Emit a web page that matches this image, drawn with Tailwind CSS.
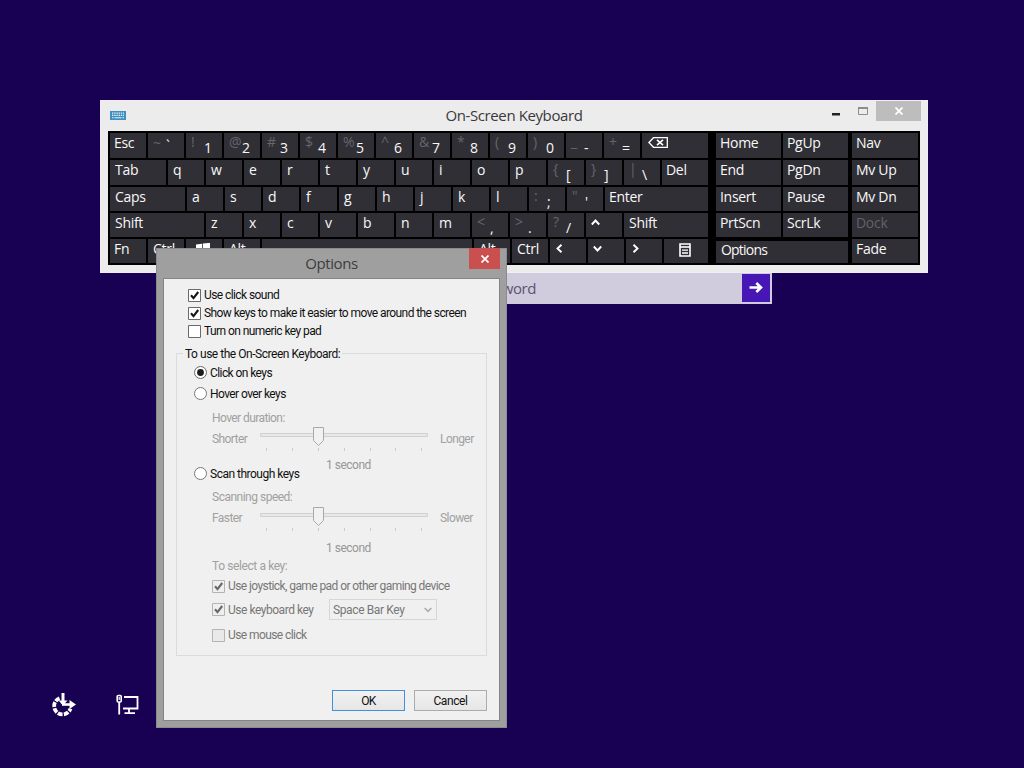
<!DOCTYPE html>
<html lang="en">
<head>
    <meta charset="utf-8"/>
    <meta content="width=device-width, initial-scale=1.0" name="viewport"/>
    <title>On-Screen Keyboard</title>
    <script src="https://cdn.jsdelivr.net/npm/@tailwindcss/browser@4"></script>
</head>
<body class="relative w-[1024px] h-[768px] overflow-hidden bg-[#180052] font-['Open_Sans',sans-serif]">

<!-- Password box -->
<div class="absolute left-[452px] top-[272px] w-[320px] h-8 flex items-center justify-between bg-[#d0cbdd] pr-0.5">
    <span class="pl-[20px] text-[15px] leading-8 tracking-[-0.45px] text-[#5b5670]">Password</span>
    <button class="w-7 h-7 flex items-center justify-center bg-[#4617b4]">
        <svg class="w-4 h-4" viewBox="0 0 16 16" fill="none" stroke="#fff" stroke-width="2.6"><path d="M1.5 7.5h11.5M8.3 3l4.7 4.5-4.7 4.5"/></svg>
    </button>
</div>

<!-- Keyboard window -->
<section class="absolute left-[100px] top-[100px] w-[828px] h-[173px] bg-[#ececed] border border-[#f1edf8]">
    <header class="relative h-[30px] flex items-start justify-end pr-[6px]">
        <svg class="absolute left-[9px] top-[10px] w-4 h-[9px]" viewBox="0 0 16 9"><path fill="#3f8fc0" d="M0 0h16v9H0z"/><path stroke="#e4f2fa" stroke-width="1.2" stroke-dasharray="1.4 .8" d="M2 2.2h12M2 4.4h12"/><path stroke="#e4f2fa" stroke-width="1.1" d="M2 6.8h1.5M4.5 6.8h7M12.5 6.8H14"/></svg>
        <h1 class="absolute inset-x-0 top-0 text-center text-[15px] leading-[28px] tracking-[-0.4px] text-[#3a3a3a]" id="kbTitle">On-Screen Keyboard</h1>
        <svg class="w-[50px] h-5" viewBox="0 0 50 20"><path fill="#222" d="M6 12h8v2.5H6z"/><path fill="none" stroke="#8c8c8c" d="M32.5 6.5h9v7h-9z"/><path fill="#8c8c8c" d="M32 6h10v2H32z"/></svg>
        <button class="w-[45px] h-5 flex items-center justify-center bg-[#bdbdbd]">
            <svg class="w-2 h-2" viewBox="0 0 8 8" stroke="#fff" stroke-width="1.8"><path d="M.5.5l7 7M7.5.5l-7 7"/></svg>
        </button>
    </header>
    <div class="ml-[7px] w-[812px] h-[134px] flex bg-black p-0.5 text-[14px] leading-5 tracking-[-0.3px] text-[#f8f8f8]">
        <div class="w-[598px] flex flex-col gap-0.5" id="keys"></div>
        <div class="ml-2 w-[132px] grid grid-cols-2 grid-rows-[25px_25px_24px_24px_24px] gap-0.5">
            <div class="bg-[#302f36] pl-1">Home</div>
            <div class="bg-[#302f36] pl-1">PgUp</div>
            <div class="bg-[#302f36] pl-1">End</div>
            <div class="bg-[#302f36] pl-1">PgDn</div>
            <div class="bg-[#302f36] pl-1">Insert</div>
            <div class="bg-[#302f36] pl-1">Pause</div>
            <div class="bg-[#302f36] pl-1">PrtScn</div>
            <div class="bg-[#302f36] pl-1">ScrLk</div>
            <div class="col-span-2 mt-0.5 bg-[#302f36] pl-[5px] leading-[18px] tracking-[-0.8px]">Options</div>
        </div>
        <div class="ml-1 w-[66px] grid grid-rows-[25px_25px_24px_24px_24px] gap-0.5">
            <div class="bg-[#302f36] pl-1">Nav</div>
            <div class="bg-[#302f36] pl-1">Mv Up</div>
            <div class="bg-[#302f36] pl-1">Mv Dn</div>
            <div class="bg-[#302f36] pl-1 text-[#626167]">Dock</div>
            <div class="bg-[#302f36] pl-1">Fade</div>
        </div>
    </div>
</section>

<!-- Options dialog -->
<section class="absolute left-[156px] top-[248px] w-[351px] h-[480px] bg-[#9f9f9f] border border-[#8b8b8b] px-[6px]">
    <header class="relative h-[29px]">
        <h2 class="text-center text-[15px] leading-[29px] tracking-[-0.4px] text-[#3c3c3c]" id="dlgTitle">Options</h2>
        <button class="absolute right-0 -top-px w-[31px] h-[21px] flex items-center justify-center bg-[#c9504f]">
            <svg class="w-2 h-2" viewBox="0 0 8 8" stroke="#fff" stroke-width="1.7"><path d="M.5.5l7 7M7.5.5l-7 7"/></svg>
        </button>
    </header>
    <div class="h-[443px] w-[337px] bg-[#f0f0f0] border border-[#858585] pl-3 pt-[7px] font-[Roboto,sans-serif] text-[12px] tracking-[-0.58px] text-[#111]">
        <label class="ml-3 h-[18px] flex items-center gap-[3px]">
            <svg class="w-[13px] h-[13px]" viewBox="0 0 13 13"><path fill="#fff" stroke="#6a6a6a" d="M.5.5h12v12H.5z"/><path fill="none" stroke="#151515" stroke-width="2.1" d="M3 6.3l2.5 2.9L10.2 3"/></svg>
            <span>Use click sound</span>
        </label>
        <label class="ml-3 h-[18px] flex items-center gap-[3px]">
            <svg class="w-[13px] h-[13px]" viewBox="0 0 13 13"><path fill="#fff" stroke="#6a6a6a" d="M.5.5h12v12H.5z"/><path fill="none" stroke="#151515" stroke-width="2.1" d="M3 6.3l2.5 2.9L10.2 3"/></svg>
            <span>Show keys to make it easier to move around the screen</span>
        </label>
        <label class="ml-3 h-[18px] flex items-center gap-[3px]">
            <svg class="w-[13px] h-[13px]" viewBox="0 0 13 13"><path fill="#fff" stroke="#6a6a6a" d="M.5.5h12v12H.5z"/></svg>
            <span>Turn on numeric key pad</span>
        </label>

        <div class="relative mt-[13px] w-[311px] h-[303px] border border-[#dadcdc] flex flex-col">
            <span class="absolute left-1.5 top-[-9px] bg-[#f0f0f0] px-0.5 leading-[18px] tracking-[-0.47px]">To use the On-Screen Keyboard:</span>
            <label class="ml-[17px] mt-[9px] h-[19px] flex items-center gap-[3px]">
                <svg class="w-[13px] h-[13px]" viewBox="0 0 13 13"><circle cx="6.5" cy="6.5" r="6" fill="#fff" stroke="#666"/><circle cx="6.5" cy="6.5" r="3.4" fill="#1c1c1c"/></svg>
                <span>Click on keys</span>
            </label>
            <label class="ml-[17px] mt-0.5 h-[19px] flex items-center gap-[3px]">
                <svg class="w-[13px] h-[13px]" viewBox="0 0 13 13"><circle cx="6.5" cy="6.5" r="6" fill="#fff" stroke="#777"/></svg>
                <span>Hover over keys</span>
            </label>
            <p class="ml-[35px] mt-1.5 leading-[18px] text-[#a0a0a0]">Hover duration:</p>
            <div class="ml-[35px] h-6 flex items-center text-[#a0a0a0]">
                <span class="w-12">Shorter</span>
                <svg class="w-[168px] h-6" viewBox="0 0 168 24"><path fill="#e7e9e9" stroke="#cfd1d1" d="M.5 6.5h167v3H.5z"/><path stroke="#ccc" d="M6.5 21v3M32.5 21v3M58.5 21v3M84.5 21v3M110.5 21v3M135.5 21v3M161.5 21v3"/><path fill="#f1f1f1" stroke="#a9a9a9" d="M53.5.5h10v13l-5 5-5-5z"/></svg>
                <span class="ml-3">Longer</span>
            </div>
            <div class="ml-[17px] mt-[5px] h-[27px] flex items-end">
                <label class="w-[132px] h-[19px] flex items-center gap-[3px] tracking-[-0.5px]">
                    <svg class="w-[13px] h-[13px]" viewBox="0 0 13 13"><circle cx="6.5" cy="6.5" r="6" fill="#fff" stroke="#777"/></svg>
                    <span>Scan through keys</span>
                </label>
                <span class="self-start leading-[18px] tracking-[-0.5px] text-[#979797]">1 second</span>
            </div>
            <p class="ml-[35px] mt-[5px] leading-[18px] tracking-[-0.5px] text-[#a0a0a0]">Scanning speed:</p>
            <div class="ml-[35px] h-6 flex items-center text-[#a0a0a0]">
                <span class="w-12">Faster</span>
                <svg class="mt-0.5 w-[168px] h-6" viewBox="0 0 168 24"><path fill="#e7e9e9" stroke="#cfd1d1" d="M.5 6.5h167v3H.5z"/><path stroke="#ccc" d="M6.5 21v3M32.5 21v3M58.5 21v3M84.5 21v3M110.5 21v3M135.5 21v3M161.5 21v3"/><path fill="#f1f1f1" stroke="#a9a9a9" d="M53.5.5h10v13l-5 5-5-5z"/></svg>
                <span class="ml-3">Slower</span>
            </div>
            <p class="ml-[149px] mt-[9px] leading-[18px] tracking-[-0.5px] text-[#979797]">1 second</p>
            <p class="ml-[35px] leading-[18px] text-[#a0a0a0] tracking-[-0.4px]">To select a key:</p>
            <label class="ml-[35px] mt-0.5 h-[18px] flex items-center gap-[3px] text-[#777]">
                <svg class="w-[13px] h-[13px]" viewBox="0 0 13 13"><path fill="#efefef" stroke="#b4b4b4" d="M.5.5h12v12H.5z"/><path fill="none" stroke="#686868" stroke-width="2.1" d="M3 6.3l2.5 2.9L10.2 3"/></svg>
                <span>Use joystick, game pad or other gaming device</span>
            </label>
            <div class="ml-[35px] mt-1 h-[21px] flex items-center text-[#777]">
                <label class="w-[117px] flex items-center gap-[3px] tracking-[-0.47px]">
                    <svg class="w-[13px] h-[13px]" viewBox="0 0 13 13"><path fill="#efefef" stroke="#b4b4b4" d="M.5.5h12v12H.5z"/><path fill="none" stroke="#686868" stroke-width="2.1" d="M3 6.3l2.5 2.9L10.2 3"/></svg>
                    <span>Use keyboard key</span>
                </label>
                <div class="w-[108px] h-[21px] flex items-center justify-between border border-[#d6d6d6] pl-[3px] pr-1 tracking-[-0.38px]">
                    <span>Space Bar Key</span>
                    <svg class="w-2 h-[6px]" viewBox="0 0 8 6" fill="none" stroke="#a8a8a8" stroke-width="1.5"><path d="M.7 1L4 4.5 7.3 1"/></svg>
                </div>
            </div>
            <label class="ml-[35px] mt-[6px] h-[18px] flex items-center gap-[3px] text-[#777]">
                <svg class="w-[13px] h-[13px]" viewBox="0 0 13 13"><path fill="#e9e9e9" stroke="#b4b4b4" d="M.5.5h12v12H.5z"/></svg>
                <span>Use mouse click</span>
            </label>
        </div>

        <div class="mt-[34px] w-[311px] flex justify-end gap-[9px]">
            <button class="w-[73px] h-[21px] border border-[#3f92da] bg-gradient-to-b from-[#f1f1f1] to-[#e6e6e6]">OK</button>
            <button class="w-[73px] h-[21px] border border-[#acacac] bg-gradient-to-b from-[#f1f1f1] to-[#e6e6e6] tracking-[-0.4px]">Cancel</button>
        </div>
    </div>
</section>

<!-- Ease of access and network -->
<footer class="absolute left-[49px] top-[692px] flex gap-10">
    <svg class="w-[27px] h-[26px]" viewBox="0 0 27 26" fill="none" stroke="#fff"><path stroke-width="3.8" stroke-dasharray="4.8 1.3" d="M10.5 6.2a8.4 8.4 0 1 0 11 10.5"/><path stroke-width="3" d="M14 1v11"/><path fill="#fff" stroke="none" d="M9.5 8.5l4.5 5 4.5-5z"/><path stroke-width="2.6" d="M13 12.5h9"/><path fill="#fff" stroke="none" d="M20.5 8l6.5 4.5-6.5 4.5z"/></svg>
    <svg class="w-[24px] h-[26px]" viewBox="0 0 24 26" fill="none" stroke="#fff"><rect x="1.2" y="3.5" width="4" height="6.5" rx="1" stroke-width="1.6"/><path stroke-width="1.2" d="M3.2 5v3"/><path stroke-width="1.8" d="M3.2 10v12.5M8 5h13.5v11.5H7M13 16.5v4M8.5 21.2h10.5"/></svg>
</footer>

<script>
    // [width, label, shifted symbol]
    var rows = [
        [25, [[36, "Esc"], [36, "`", "~"], [36, "1", "!"], [36, "2", "@"], [36, "3", "#"], [36, "4", "$"], [36, "5", "%"], [36, "6", "^"], [36, "7", "&"], [36, "8", "*"], [36, "9", "("], [36, "0", ")"], [36, "-", "_"], [36, "=", "+"], [66, "icon:back"]]],
        [25, [[56, "Tab"], [36, "q"], [36, "w"], [36, "e"], [36, "r"], [36, "t"], [36, "y"], [36, "u"], [36, "i"], [36, "o"], [36, "p"], [36, "[", "{"], [36, "]", "}"], [36, "\\", "|"], [46, "Del"]]],
        [24, [[75, "Caps"], [36, "a"], [36, "s"], [36, "d"], [36, "f"], [36, "g"], [36, "h"], [36, "j"], [36, "k"], [36, "l"], [36, ";", ":"], [36, "'", "\""], [103, "Enter"]]],
        [24, [[94, "Shift"], [36, "z"], [36, "x"], [36, "c"], [36, "v"], [36, "b"], [36, "n"], [36, "m"], [36, ",", "<"], [36, ".", ">"], [36, "/", "?"], [36, "icon:up"], [84, "Shift"]]],
        [24, [[36, "Fn"], [36, "Ctrl"], [36, "icon:win"], [36, "Alt"], [210, ""], [36, "Alt"], [36, "Ctrl"], [36, "icon:left"], [36, "icon:down"], [36, "icon:right"], [44, "icon:menu"]]]
    ];
    var icons = {
        back: '<svg class="mt-1 ml-px w-5 h-[11px]" viewBox="0 0 20 11" fill="none" stroke="#fff" stroke-width="1.3"><path d="M5.5.7h13.8v9.6H5.5L.9 5.5z"/><path stroke-width="1.7" d="M9 2.8l6 5.4M15 2.8L9 8.2"/></svg>',
        up: '<svg class="mt-[5px] w-[9px] h-[9px]" viewBox="0 0 9 9" fill="none" stroke="#fff" stroke-width="1.9"><path d="M.8 6.5l3.7-4 3.7 4"/></svg>',
        down: '<svg class="mt-[5px] w-[9px] h-[9px]" viewBox="0 0 9 9" fill="none" stroke="#fff" stroke-width="1.9"><path d="M.8 2.5l3.7 4 3.7-4"/></svg>',
        left: '<svg class="mt-[5px] w-[9px] h-[9px]" viewBox="0 0 9 9" fill="none" stroke="#fff" stroke-width="1.9"><path d="M6.5.8l-4 3.7 4 3.7"/></svg>',
        right: '<svg class="mt-[5px] w-[9px] h-[9px]" viewBox="0 0 9 9" fill="none" stroke="#fff" stroke-width="1.9"><path d="M2.5.8l4 3.7-4 3.7"/></svg>',
        win: '<svg class="mt-1 ml-[5px] w-[14px] h-[13px]" viewBox="0 0 14 13" fill="#fff"><path d="M0 1.6l6-.9v5.5H0zM6.8.6L14-.2v6.4H6.8zM0 7h6v5.4l-6-.9zM6.8 7H14v6l-7.2-.6z"/></svg>',
        menu: '<svg class="mt-1 ml-[10px] w-[12px] h-[14px]" viewBox="0 0 12 14" fill="none" stroke="#fff"><path stroke-width="1.6" d="M1 1h10v12H1z"/><path stroke-width="1.6" d="M1 4h10"/><path stroke-width="1.3" d="M3 7.2h6M3 10h6"/></svg>'
    };
    document.getElementById("keys").innerHTML = rows.map(function (row, r) {
        return '<div class="flex gap-0.5" style="height:' + row[0] + 'px">' + row[1].map(function (key) {
            var label = key[1].replace("<", "&lt;");
            var pad = /^(Esc|Fn|Del|Enter)$/.test(key[1]) ? "pl-1" : "pl-[5px]";
            if (key[1].indexOf("icon:") === 0) label = icons[key[1].slice(5)];
            if (key[2]) {
                var sub = key[2].replace("&", "&amp;").replace("<", "&lt;");
                label = '<span class="w-[13px] -mt-px text-[#66656b]">' + sub + '</span><span class="pt-[5px]">' + label + '</span>';
                if (key[1] === "`") label = '<span class="w-[13px] text-[#66656b]">~</span><span class="pt-[3px]">`</span>';
            }
            return '<div class="flex items-start shrink-0 overflow-hidden bg-[#302f36] ' + pad + '" style="width:' + key[0] + 'px">' + label + '</div>';
        }).join("") + '</div>';
    }).join("");
</script>
</body>
</html>
